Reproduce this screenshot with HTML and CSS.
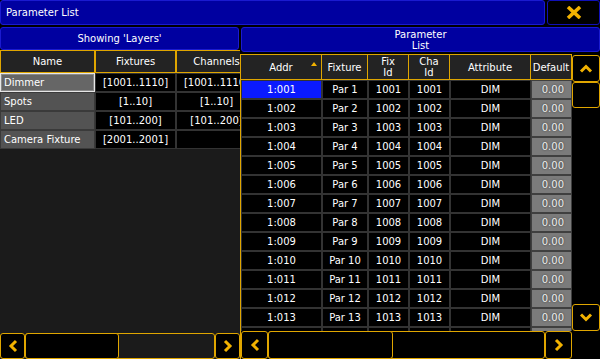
FILE: index.html
```html
<!DOCTYPE html>
<html lang="en">

<head>
    <meta charset="UTF-8">
    <meta name="viewport" content="width=device-width, initial-scale=1.0">
    <title>Parameter List</title>
    <link rel="stylesheet" href="styles.css">
</head>

<body>
    <div id="app">
        <div id="titlebar">
            <div id="title">Parameter List</div>
            <div id="close">
                <svg width="16" height="13" viewBox="0 0 16 13">
                    <path d="M2 1 L14 12 M14 1 L2 12" stroke="#f2b200" stroke-width="3.6" fill="none" />
                </svg>
            </div>
        </div>
        <div id="panels">
            <div id="left">
                <div class="head" id="left-head">Showing 'Layers'</div>
                <div id="layers">
                    <div class="hcell">Name</div>
                    <div class="hcell">Fixtures</div>
                    <div class="hcell">Channels</div>

                    <div class="name selected">Dimmer</div>
                    <div class="cell">[1001..1110]</div>
                    <div class="cell">[1001..1110]</div>

                    <div class="name">Spots</div>
                    <div class="cell">[1..10]</div>
                    <div class="cell">[1..10]</div>

                    <div class="name">LED</div>
                    <div class="cell">[101..200]</div>
                    <div class="cell">[101..200]</div>

                    <div class="name">Camera Fixture</div>
                    <div class="cell">[2001..2001]</div>
                    <div class="cell"></div>
                </div>
                <div id="left-fill"></div>
                <div class="hbar" id="left-bar">
                    <div class="btn">
                        <svg width="10" height="14" viewBox="0 0 10 14"><path d="M8 2 L3 7 L8 12" stroke="#f2b200" stroke-width="3" fill="none" /></svg>
                    </div>
                    <div class="track"><div class="thumb"></div></div>
                    <div class="btn">
                        <svg width="10" height="14" viewBox="0 0 10 14"><path d="M2 2 L7 7 L2 12" stroke="#f2b200" stroke-width="3" fill="none" /></svg>
                    </div>
                </div>
            </div>
            <div id="right">
                <div class="head" id="right-head">Parameter<br>List</div>
                <div id="rbody">
                    <div id="sheet">
                        <div class="hcell sort">Addr<span class="arrow"></span></div>
                        <div class="hcell">Fixture</div>
                        <div class="hcell">Fix<br>Id</div>
                        <div class="hcell">Cha<br>Id</div>
                        <div class="hcell">Attribute</div>
                        <div class="hcell">Default</div>
                    </div>
                    <div id="vbar">
                        <div class="btn vbtn">
                            <svg width="14" height="9" viewBox="0 0 14 9"><path d="M2 7.5 L7 2.5 L12 7.5" stroke="#f2b200" stroke-width="3" fill="none" /></svg>
                        </div>
                        <div class="vthumb"></div>
                        <div class="vtrack"></div>
                        <div class="btn vbtn">
                            <svg width="14" height="9" viewBox="0 0 14 9"><path d="M2 1.5 L7 6.5 L12 1.5" stroke="#f2b200" stroke-width="3" fill="none" /></svg>
                        </div>
                    </div>
                    <div class="hbar" id="right-bar">
                        <div class="btn">
                            <svg width="10" height="14" viewBox="0 0 10 14"><path d="M8 2 L3 7 L8 12" stroke="#f2b200" stroke-width="3" fill="none" /></svg>
                        </div>
                        <div class="track"><div class="thumb"></div></div>
                        <div class="btn">
                            <svg width="10" height="14" viewBox="0 0 10 14"><path d="M2 2 L7 7 L2 12" stroke="#f2b200" stroke-width="3" fill="none" /></svg>
                        </div>
                    </div>
                    <div id="corner"></div>
                </div>
            </div>
        </div>
    </div>

    <script>
        let sheet = document.getElementById("sheet");

        for (let i = 1; i <= 14; i++) {
            let n = String(i).padStart(3, "0");
            let cells = ["1:" + n, "Par " + i, 1000 + i, 1000 + i, "DIM", "0.00"];
            cells.forEach(function (text, c) {
                let div = document.createElement("div");
                div.className = "cell";
                if (c == 0 && i == 1) div.className += " current";
                if (c == 5) div.className += " default";
                div.textContent = text;
                sheet.appendChild(div);
            });
        }
    </script>
</body>

</html>
```

FILE: styles.css
```css
* {
    box-sizing: border-box;
}

body {
    margin: 0;
    background: #000;
    font-family: "DejaVu Sans", sans-serif;
    font-size: 10px;
    color: #fff;
}

#app {
    width: 600px;
    height: 359px;
    display: flex;
    flex-direction: column;
    overflow: hidden;
}

#titlebar {
    height: 27px;
    display: flex;
    gap: 2px;
    flex-shrink: 0;
}

#title {
    flex: 1;
    height: 25px;
    background: #0000a0;
    border: 1px solid #1a1ad0;
    border-radius: 3px;
    padding-left: 5px;
    line-height: 23px;
}

#close {
    width: 53px;
    height: 25px;
    background: #000;
    border: 1px solid #1010b8;
    border-radius: 3px;
    display: flex;
    justify-content: center;
    align-items: center;
}

#panels {
    flex: 1;
    display: flex;
    min-height: 0;
}

.head {
    background: #0000a0;
    border: 1px solid #1a1ad0;
    border-radius: 3px;
    text-align: center;
    flex-shrink: 0;
}

/* left side: layers */

#left {
    width: 240px;
    display: flex;
    flex-direction: column;
    overflow: hidden;
}

#left-head {
    height: 23px;
    margin-right: 1px;
    line-height: 21px;
}

#layers {
    display: grid;
    grid-template-columns: 95px 81px 81px;
    grid-template-rows: 23px repeat(4, 19px);
    width: 257px;
    flex-shrink: 0;
}

.hcell {
    background: #232323;
    border: 1px solid #e0a600;
    display: flex;
    justify-content: center;
    align-items: center;
    text-align: center;
    line-height: 11px;
    white-space: nowrap;
}

.cell {
    background: #000;
    border: 1px solid #333;
    display: flex;
    justify-content: center;
    align-items: center;
    white-space: nowrap;
}

.name {
    background: #535353;
    border: 1px solid #3a3a3a;
    padding-left: 3px;
    display: flex;
    align-items: center;
    white-space: nowrap;
}

.name.selected {
    background: #666;
    border: 1px solid #e6e6e6;
    box-shadow: inset 0 0 0 1px #8a8a8a;
}

#left-fill {
    flex: 1;
    background: #1b1b1b;
}

/* scroll bars */

.hbar {
    display: flex;
    flex-shrink: 0;
}

#left-bar {
    height: 26px;
    background: #1b1b1b;
}

.btn {
    background: #000;
    border: 1px solid #e0a600;
    border-radius: 3px;
    display: flex;
    justify-content: center;
    align-items: center;
    flex-shrink: 0;
}

#left-bar .btn {
    width: 25px;
}

.track {
    flex: 1;
    border: 1px solid #e0a600;
    border-radius: 3px;
    display: flex;
}

#left-bar .track {
    background: #1b1b1b;
}

#left-bar .thumb {
    width: 94px;
}

.thumb {
    background: #000;
    border: 1px solid #e0a600;
    border-radius: 3px;
    margin: -1px;
}

/* right side: parameters */

#right {
    width: 360px;
    display: flex;
    flex-direction: column;
    min-height: 0;
}

#right-head {
    height: 25px;
    margin: 0 0 2px 1px;
    line-height: 11px;
    padding-top: 1px;
}

#rbody {
    flex: 1;
    display: grid;
    grid-template-columns: 331px 28px;
    grid-template-rows: minmax(0, 1fr) 28px;
    border-left: 1px solid #e0a600;
    min-height: 0;
}

#sheet {
    display: grid;
    grid-template-columns: 81px 46px 41px 41px 81px 41px;
    grid-template-rows: 26px;
    grid-auto-rows: 19px;
    overflow: hidden;
    min-height: 0;
}

#sheet .hcell {
    border-width: 1px 1px 1px 0;
}

.sort {
    position: relative;
}

.arrow {
    position: absolute;
    right: 4px;
    top: 7px;
    border-left: 3px solid transparent;
    border-right: 3px solid transparent;
    border-bottom: 4px solid #f2b200;
}

.cell.current {
    background: #0a1aff;
}

.cell.default {
    background: #7b7b7b;
    border-color: #3f3f3f;
    justify-content: flex-end;
    padding-right: 7px;
    color: #eee;
    text-shadow: 0 0 2px #333;
}

#vbar {
    display: flex;
    flex-direction: column;
    padding-top: 1px;
    min-height: 0;
}

.vbtn {
    height: 27px;
}

.vthumb {
    height: 26px;
    border: 1px solid #e0a600;
    border-radius: 3px;
    flex-shrink: 0;
}

.vtrack {
    flex: 1;
}

#right-bar .btn {
    width: 27px;
}

#right-bar .track {
    background: #000;
}

#right-bar .thumb {
    width: 125px;
}

#corner {
    background: #000;
}
```
